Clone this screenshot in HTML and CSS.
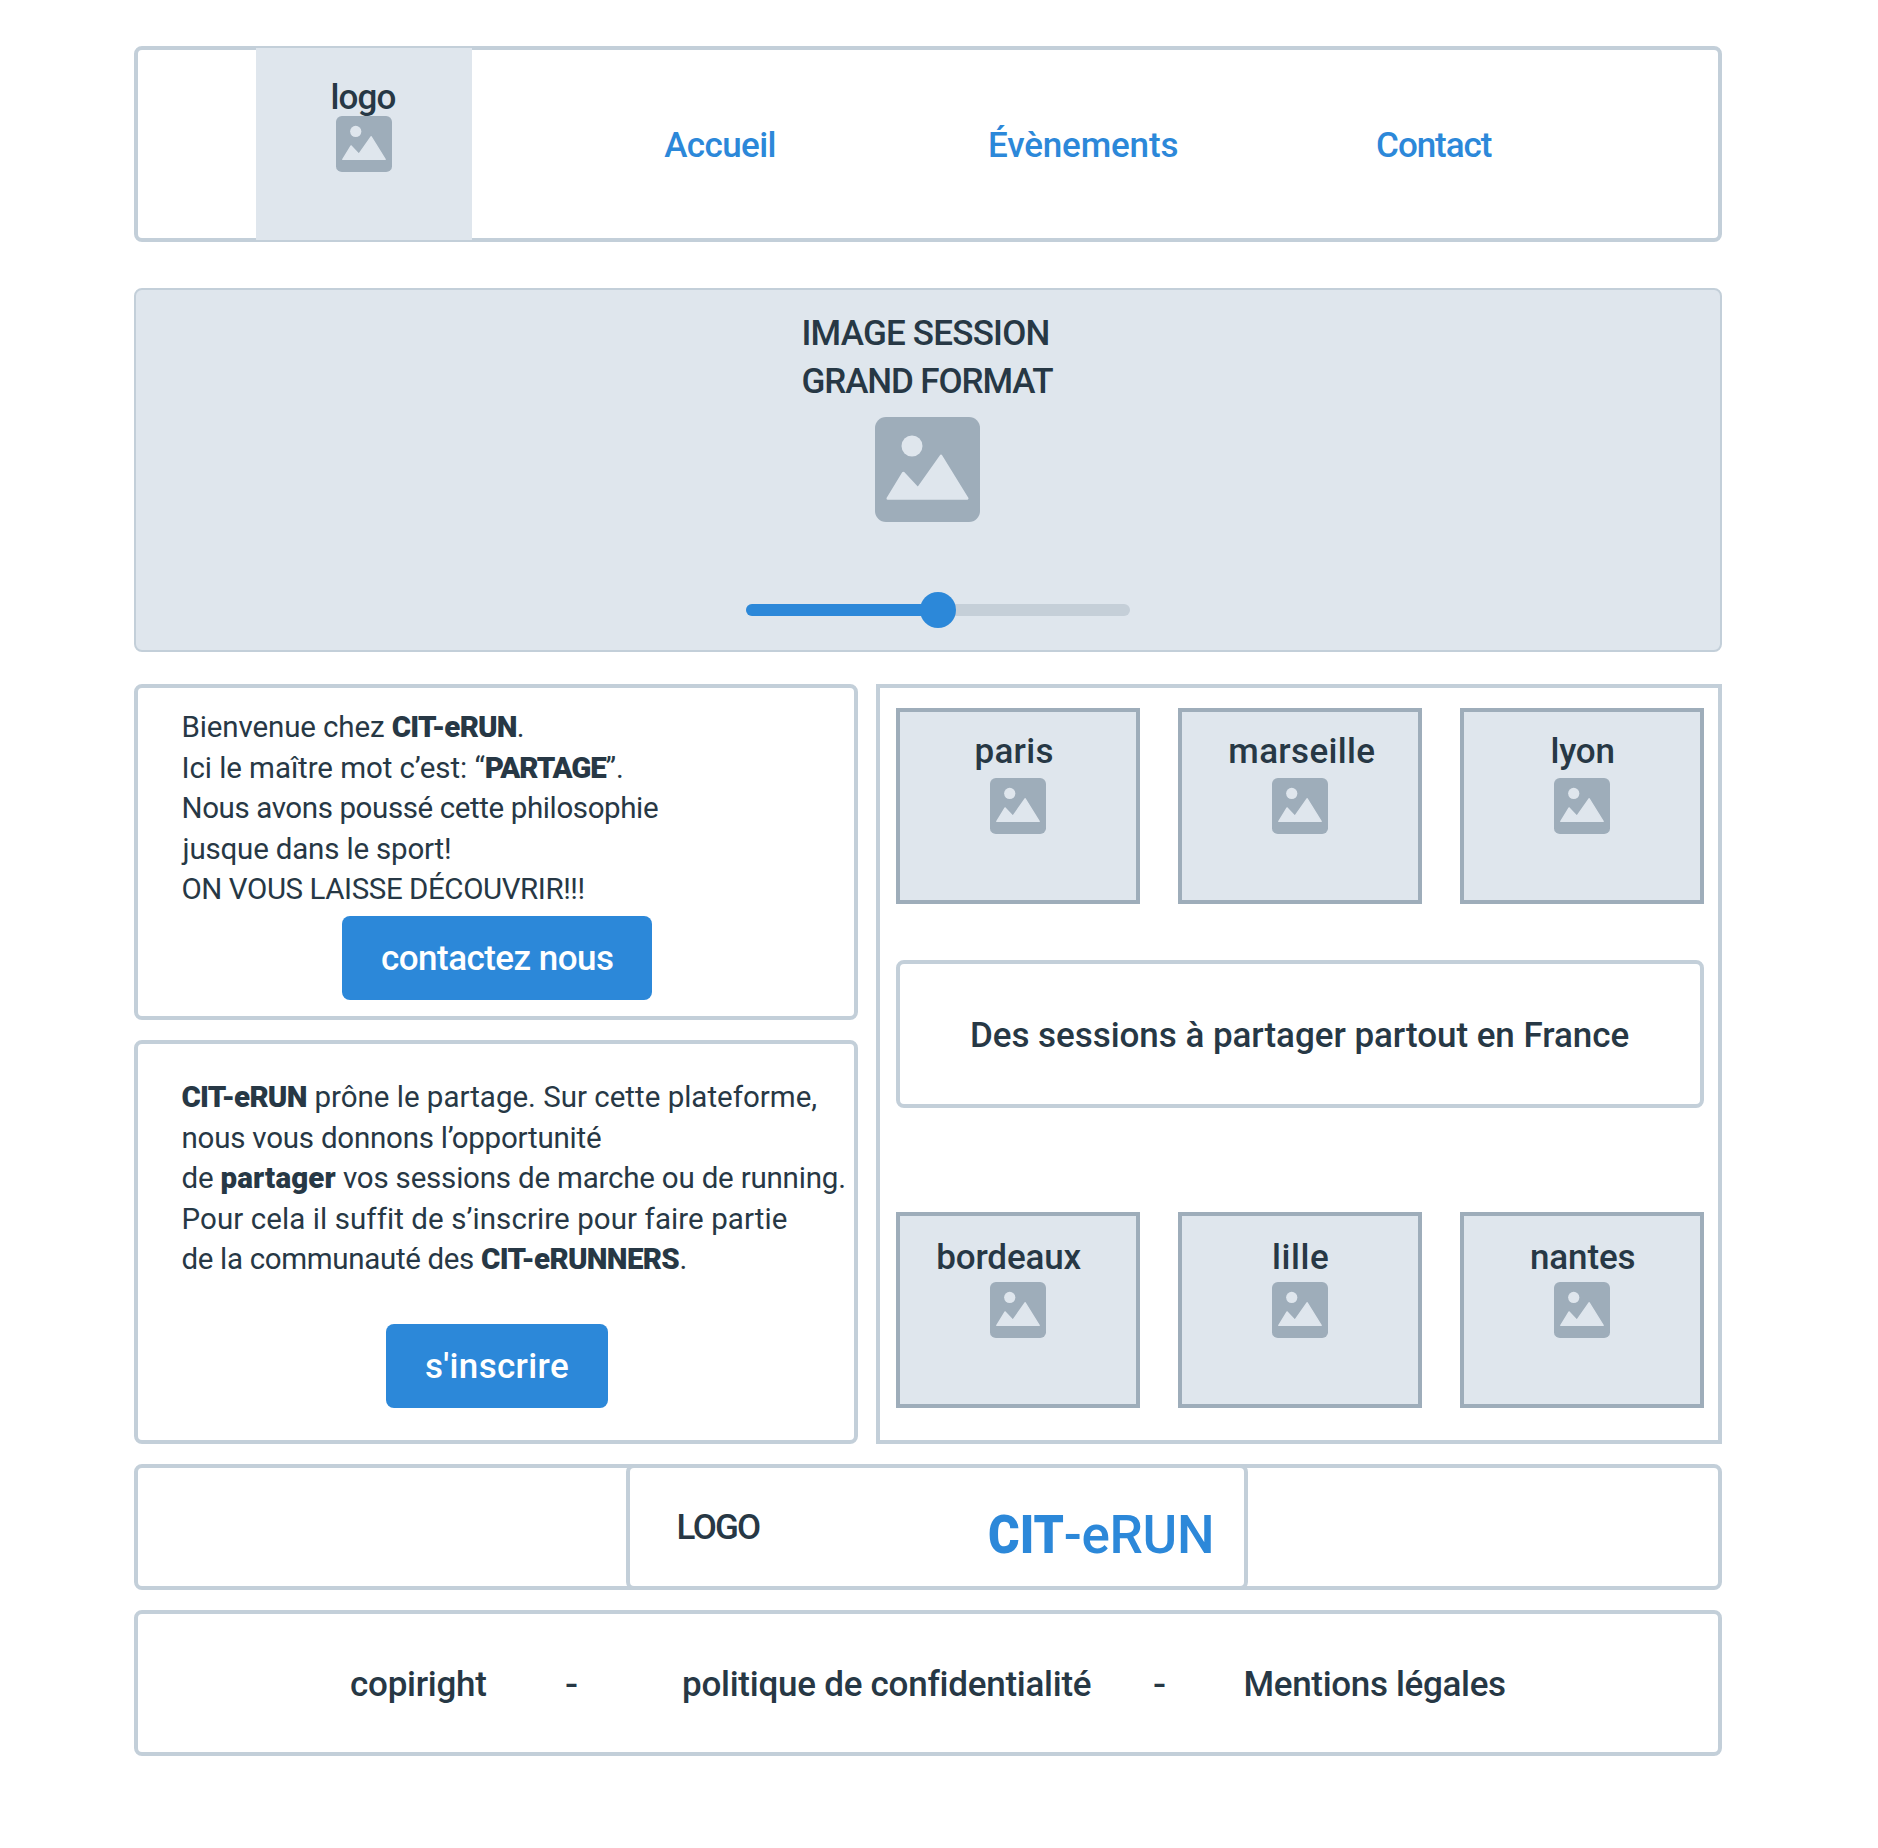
FILE: index.html
```html
<!DOCTYPE html>
<html lang="fr">
<head>
<meta charset="utf-8">
<title>CIT-eRUN</title>
<link rel="stylesheet" href="styles.css">
</head>
<body>
<svg class="defs" aria-hidden="true">
  <symbol id="picture" viewBox="0 0 105 105">
    <rect class="pic-frame" width="105" height="105" rx="11"/>
    <circle class="pic-shape" cx="37" cy="29" r="10.5"/>
    <path class="pic-shape pic-hills" d="M12.8 81.4 28.3 56 43 71.6 66 38.9 92.2 81.4Z"/>
  </symbol>
</svg>
<div class="page">
  <header class="box header">
    <a class="brand"><span class="brand-name">logo</span><svg class="icon"><use href="#picture"/></svg></a>
    <nav class="nav">
      <a class="nav-home">Accueil</a>
      <a class="nav-events">Évènements</a>
      <a class="nav-contact">Contact</a>
    </nav>
  </header>

  <section class="hero">
    <div class="hero-title"><span class="hero-l1">IMAGE SESSION</span><span class="hero-l2">GRAND FORMAT</span></div>
    <svg class="icon icon-large"><use href="#picture"/></svg>
    <div class="slider"><div class="slider-fill"></div><div class="slider-knob"></div></div>
  </section>

  <main class="main">
    <div class="left">
      <section class="box card welcome">
        <div class="copy">
          <p class="w1">Bienvenue chez <b>CIT-eRUN</b>.</p>
          <p class="w2">Ici le maître mot c’est: “<b>PARTAGE</b>”.</p>
          <p class="w3">Nous avons poussé cette philosophie</p>
          <p class="w4">jusque dans le sport!</p>
          <p class="w5">ON VOUS LAISSE DÉCOUVRIR!!!</p>
        </div>
        <a class="button button-contact">contactez nous</a>
      </section>
      <section class="box card join">
        <div class="copy">
          <p class="j1"><b>CIT-eRUN</b> prône le partage. Sur cette plateforme,</p>
          <p class="j2">nous vous donnons l’opportunité</p>
          <p class="j3">de <b>partager</b> vos sessions de marche ou de running.</p>
          <p class="j4">Pour cela il suffit de s’inscrire pour faire partie</p>
          <p class="j5">de la communauté des <b>CIT-eRUNNERS</b>.</p>
        </div>
        <a class="button button-join">s'inscrire</a>
      </section>
    </div>
    <section class="sessions">
      <div class="tiles">
        <div class="tile"><span class="city paris">paris</span><svg class="icon"><use href="#picture"/></svg></div>
        <div class="tile"><span class="city marseille">marseille</span><svg class="icon"><use href="#picture"/></svg></div>
        <div class="tile"><span class="city lyon">lyon</span><svg class="icon"><use href="#picture"/></svg></div>
      </div>
      <div class="box banner">Des sessions à partager partout en France</div>
      <div class="tiles tiles-low">
        <div class="tile"><span class="city bordeaux">bordeaux</span><svg class="icon"><use href="#picture"/></svg></div>
        <div class="tile"><span class="city lille">lille</span><svg class="icon"><use href="#picture"/></svg></div>
        <div class="tile"><span class="city nantes">nantes</span><svg class="icon"><use href="#picture"/></svg></div>
      </div>
    </section>
  </main>

  <section class="box signature">
    <div class="box signature-inner">
      <span class="signature-label">LOGO</span>
      <span class="wordmark"><b>CIT</b><span class="wordmark-rest">-eRUN</span></span>
    </div>
  </section>

  <footer class="box footer">
    <a class="f-copy">copiright</a><span class="f-dash1">-</span><a class="f-privacy">politique de confidentialité</a><span class="f-dash2">-</span><a class="f-legal">Mentions légales</a>
  </footer>
</div>
</body>
</html>
```

FILE: styles.css
```css
:root {
  --line: #c3cfd9;
  --tile: #dfe6ed;
  --grey: #9eadba;
  --blue: #2c88d9;
  --ink: #273845;
}
* { box-sizing: border-box; }
body {
  margin: 0;
  background: #fff;
  color: var(--ink);
  font: 500 35px/48px Roboto, "Liberation Sans", sans-serif;
  white-space: nowrap;
}
p { margin: 0; }
b { font-weight: 900; }
.defs { display: none; }
.pic-frame { fill: var(--grey); }
.pic-shape { fill: var(--tile); }
.pic-hills { stroke: var(--tile); stroke-width: 2.6; stroke-linejoin: round; }
.icon { display: block; flex: none; width: 56px; height: 56px; }
.icon-large { width: 105px; height: 105px; margin-right: 1px; }

.page { width: 1588px; height: 1848px; margin-left: 134px; padding-top: 46px; }
.box { border: 4px solid var(--line); border-radius: 8px; background: #fff; }

.header { display: flex; height: 196px; padding-left: 118px; }
.brand {
  display: flex; flex-direction: column; align-items: center;
  width: 216px; height: 192px; margin-top: -2px; padding-top: 26px;
  background: var(--tile);
}
.brand-name { margin: 0 2px -6px 0; letter-spacing: -0.87px; z-index: 1; }
.nav {
  display: grid; grid-template-columns: 323.8px 388.1px auto;
  padding: 72px 0 0 192.2px; color: var(--blue);
}
.nav-home { letter-spacing: -0.6px; }
.nav-events { letter-spacing: -0.15px; }
.nav-contact { letter-spacing: -1.05px; }

.hero {
  display: flex; flex-direction: column; align-items: center;
  height: 364px; margin-top: 46px; padding-top: 20px;
  border: 2px solid var(--line); border-radius: 8px; background: var(--tile);
}
.hero-title { display: flex; flex-direction: column; width: 253px; margin-bottom: 11px; }
.hero-l1 { letter-spacing: -0.79px; }
.hero-l2 { letter-spacing: -1.1px; }
.slider {
  display: flex; align-items: center;
  width: 384px; height: 12px; margin: 82px 0 0 20px;
  border-radius: 6px; background: #c5cfd8;
}
.slider-fill { width: 192px; height: 12px; border-radius: 6px 0 0 6px; background: var(--blue); }
.slider-knob { width: 36px; height: 36px; margin-left: -18px; border-radius: 50%; background: var(--blue); }

.main { display: flex; gap: 18px; height: 760px; margin-top: 32px; }
.left { display: flex; flex-direction: column; gap: 20px; width: 724px; }
.welcome { height: 336px; padding-top: 19px; }
.join { height: 404px; padding-top: 33px; }
.copy { height: 209px; padding-left: 43.5px; font-weight: 400; font-size: 29.5px; line-height: 40.6px; }
.join .copy { height: 247px; }
.w1 { letter-spacing: -0.12px; }
.w2 { letter-spacing: -0.07px; }
.w3 { letter-spacing: -0.39px; }
.w4 { letter-spacing: -0.18px; padding-left: 1px; }
.w5 { letter-spacing: -0.43px; }
.j1 { letter-spacing: 0; }
.j2 { letter-spacing: -0.22px; }
.j3 { letter-spacing: -0.2px; }
.j4 { letter-spacing: 0.08px; }
.j5 { letter-spacing: -0.33px; }
.w1 b, .j1 b { letter-spacing: -0.8px; }
.w2 b { letter-spacing: -1.1px; }
.j3 b { letter-spacing: 0.14px; }
.j5 b { letter-spacing: -0.7px; }
.j1 b, .j5 b { margin-right: 0.5px; }
.button {
  display: block; height: 84px; padding: 19px 0 0 39px;
  border-radius: 8px; background: var(--blue); color: #fff;
}
.button-contact { width: 310px; margin-left: 204px; letter-spacing: -0.53px; }
.button-join { width: 222px; margin-left: 248px; letter-spacing: 0.34px; }

.sessions { width: 846px; padding: 20px 14px 0 16px; border: 4px solid var(--line); }
.tiles { display: flex; gap: 38px; }
.tile {
  display: flex; flex-direction: column; gap: 2px;
  width: 244px; height: 196px; padding-top: 16px;
  border: 4px solid var(--grey); background: var(--tile);
}
.tile .icon { margin-left: 90px; }
.tiles-low .tile { gap: 0; padding-top: 18px; }
.paris { margin-left: 74.5px; letter-spacing: 0.29px; }
.marseille { margin-left: 46.3px; letter-spacing: 0.34px; }
.lyon { margin-left: 86.5px; letter-spacing: -0.22px; }
.bordeaux { margin-left: 36.3px; letter-spacing: -0.17px; }
.lille { margin-left: 90px; letter-spacing: 0.58px; }
.nantes { margin-left: 66px; letter-spacing: -0.15px; }
.banner { height: 148px; margin: 56px 0 104px; padding: 48px 0 0 70px; letter-spacing: -0.05px; }

.signature { height: 126px; margin-top: 20px; padding-left: 488px; }
.signature-inner { display: flex; width: 622px; height: 126px; margin-top: -4px; padding: 36px 0 0 46.6px; }
.signature-label { width: 311.6px; letter-spacing: -1.75px; }
.wordmark { display: flex; margin-top: -1px; color: var(--blue); font-size: 53px; line-height: 64px; }
.wordmark b { width: 75.5px; transform: scaleX(0.91); transform-origin: left; }
.wordmark-rest { letter-spacing: -0.3px; }

.footer {
  display: grid; grid-template-columns: 215px 117px 470.5px 91px auto;
  height: 146px; margin-top: 20px; padding: 47px 0 0 212px;
}
.f-dash1, .f-dash2 { transform: scaleX(1.1); transform-origin: left; }
.f-copy { letter-spacing: -0.25px; }
.f-privacy { letter-spacing: -0.25px; }
.f-legal { letter-spacing: -0.33px; }
```
